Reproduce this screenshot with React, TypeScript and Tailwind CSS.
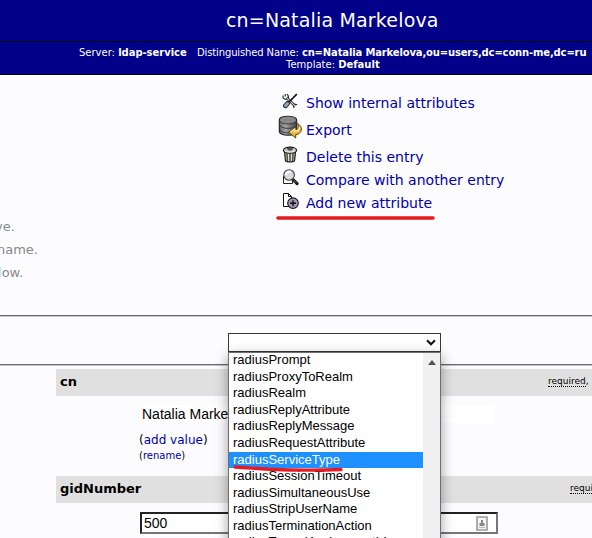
import type { ReactNode } from 'react';

function ToolsIcon() {
  return (
    <svg width="16" height="16" viewBox="0 0 16 16" fill="none">
      <path d="M4.5 4.5 13 13" stroke="#222" strokeWidth="2.6" />
      <path d="M1 2.6v2.1l1.8 1.6h2.4l1.2-1.5V2.9L4.8 1M3.2 1v2.4M12 14.8l-.6-2.4 1.2-1.2 2.6.6" stroke="#222" strokeWidth="1.1" />
      <path d="M4 4.2 13.4 13.4" stroke="#ddd" strokeWidth="1.1" />
      <path d="M14.8 1.2 7 9" stroke="#111" strokeWidth="1.7" />
      <path d="M5.6 10.4 3.4 12.8" stroke="#222" strokeWidth="4.8" strokeLinecap="round" />
      <path d="M5.5 10.5 3.5 12.7" stroke="#8fa8c8" strokeWidth="3" strokeLinecap="round" />
    </svg>
  );
}

function ExportIcon() {
  return (
    <svg width="24" height="24" viewBox="0 0 24 24">
      <defs>
        <linearGradient id="disk" x1="0" x2="1">
          <stop offset="0" stopColor="#666" />
          <stop offset=".35" stopColor="#a5a5a5" />
          <stop offset="1" stopColor="#444" />
        </linearGradient>
      </defs>
      <path d="M1.3 5C1.3.2 18.7.2 18.7 5v11.5c0 5-17.4 5-17.4 0Z" fill="url(#disk)" stroke="#222" strokeWidth="1.1" />
      <ellipse cx="10" cy="5" rx="8" ry="3.6" fill="#888" />
      <path d="M1.8 6c1 4 15.5 4 16.5 0M1.8 10c1 4.5 15.5 4.5 16.5 0M1.8 14.5c1 4.5 15.5 4.5 16.5 0" fill="none" stroke="#333" strokeWidth=".9" />
      <path d="M19.5 8.5c5.5 3 5.5 9.8-1.8 11.3V23L10.5 17.2l7.2-5v2.9c2.6-.6 3.2-3.4 1.8-6.6Z" fill="#edb83e" stroke="#59420d" />
      <path d="m12.6 17 4.1-3v2.4c3.2-.2 5.1-2 4.9-4.6" fill="none" stroke="#ffe9a7" strokeWidth="1.3" />
    </svg>
  );
}

function TrashIcon() {
  return (
    <svg width="16" height="17" viewBox="0 0 16 17">
      <path d="m2.5 6 .9 8.4c.2 2 9 2 9.2 0l.9-8.4Z" fill="#aaa89b" stroke="#24241f" strokeWidth="1.2" />
      <path d="m5 7 .5 8M8 7v8.5M11 7l-.5 8" stroke="#49493f" strokeWidth="1.2" />
      <path d="m6.5 8 .1 7M9.5 8v7" stroke="#eee" strokeWidth=".8" />
      <ellipse cx="8" cy="4.2" rx="6.6" ry="3" fill="#c7c5b9" stroke="#222" strokeWidth="1.2" />
      <ellipse cx="8" cy="2.8" rx="2.4" ry="1.3" fill="#686258" stroke="#222" strokeWidth=".8" />
      <path d="M3 5.1c2 1.3 8 1.3 10 0" fill="none" stroke="#eee" />
    </svg>
  );
}

function CompareIcon() {
  return (
    <svg width="17" height="17" viewBox="0 0 17 17">
      <path d="M1.5 7v7.5h9v-3" fill="#fff" stroke="#222" />
      <path d="m10.5 10 4.6 4.6" stroke="#111" strokeWidth="3" strokeLinecap="round" />
      <path d="m11.3 10.8 3.4 3.4" stroke="#999" strokeWidth=".8" />
      <circle cx="7.1" cy="6" r="5.3" fill="#d8d8dc" stroke="#444" strokeWidth="1.1" />
      <path d="M3.8 6.2C3.9 3.5 6.2 2.4 8.6 3" fill="none" stroke="#fff" strokeWidth="2" />
    </svg>
  );
}

function AddIcon() {
  return (
    <svg width="17" height="17" viewBox="0 0 17 17">
      <path d="M1.5.5h5l3 3v10h-8Z" fill="#fff" stroke="#111" />
      <path d="M6.5.5v3h3" fill="none" stroke="#111" />
      <circle cx="11" cy="10.2" r="5.3" fill="#a196b8" stroke="#17121d" strokeWidth="1.1" />
      <path d="M11 7.2v6M8 10.2h6" stroke="#111" strokeWidth="1.4" />
    </svg>
  );
}

function Action({ icon, children, tall = false }: { icon: ReactNode; children: ReactNode; tall?: boolean }) {
  return (
    <div className={`flex items-center ${tall ? 'h-[31px]' : 'h-[23px]'}`}>
      <span className="flex w-7 shrink-0 items-center justify-start">{icon}</span>
      <a className="text-[14px] leading-[18px] text-[#0000aa]">{children}</a>
    </div>
  );
}

function Rule() {
  return <div className="h-[2px] shrink-0 border-t border-[#6a6a6e] bg-[#c4c4c6]" />;
}

const options = [
  'radiusPrompt', 'radiusProxyToRealm', 'radiusRealm', 'radiusReplyAttribute',
  'radiusReplyMessage', 'radiusRequestAttribute', 'radiusServiceType',
  'radiusSessionTimeout', 'radiusSimultaneousUse', 'radiusStripUserName',
  'radiusTerminationAction', 'radiusTunnelAssignmentId',
];

function AttributeSelect() {
  return (
    <div className="relative z-10 ml-[228px] w-[213px]">
      <div className="flex h-[19px] items-center justify-end border border-[#39393b] bg-white pr-1">
        <svg width="10" height="7" viewBox="0 0 10 7" fill="none"><path d="m1 1.3 4 4 4-4" stroke="#111" strokeWidth="2" /></svg>
      </div>
      <div className="absolute left-0 top-[19px] flex h-[210px] w-[213px] border border-[#6f6f72] bg-white font-['Liberation_Sans',Arial,sans-serif] text-[13px] shadow-[0_4px_12px_rgba(0,0,0,0.38)]">
        <div className="w-[194px]">
          {options.map((option) => (
            <div key={option} className={`relative whitespace-nowrap pl-1 leading-[14px] last:-mt-px ${option === 'radiusServiceType' ? 'z-10 -mt-[0.6px] mb-[1.2px] h-[16px] bg-[#1e90ff] pt-[0.6px] text-white' : 'h-[16.6px] text-black'}`}>
              {option}
              {option === 'radiusServiceType' && (
                <svg className="absolute left-1 top-[12px]" width="112" height="8" viewBox="0 0 112 8" fill="none">
                  <path d="M2 3C20 4 37 5.7 57 6s34 .2 51-.5" stroke="#e51c23" strokeWidth="3.4" strokeLinecap="round" />
                </svg>
              )}
            </div>
          ))}
        </div>
        <div className="flex w-[17px] justify-center bg-[#f0f0f0] pt-[7px]">
          <svg width="8" height="5" viewBox="0 0 8 5"><path d="M0 5 4 0l4 5Z" fill="#505050" /></svg>
        </div>
      </div>
    </div>
  );
}

export default function App() {
  return (
    <main className="flex h-[538px] w-[592px] flex-col overflow-hidden bg-[#fcfcff] font-['DejaVu_Sans',Verdana,sans-serif]">
      <h1 className="h-[42px] shrink-0 border-b border-black bg-[#000088] pl-[226px] pt-[7px] text-[19px] leading-[26px] tracking-[0.17px] text-white">
        <span className="block whitespace-nowrap">cn=Natalia Markelova</span>
      </h1>
      <div className="h-[33px] shrink-0 border-b border-black bg-[#000088] pt-[5px] text-[10px] leading-[12px] text-white">
        <div className="flex pl-[79px] whitespace-nowrap">
          <div className="w-[118px]">Server: <b className="tracking-[-0.04px]">ldap-service</b></div>
          <div className="tracking-[-0.13px]">Distinguished Name: <b className="tracking-[-0.15px]">cn=Natalia Markelova,ou=users,dc=conn-me,dc=ru</b></div>
        </div>
        <div className="pl-[286px]">Template: <b>Default</b></div>
      </div>
      <section className="flex h-[240px] shrink-0">
        <div className="w-[278px] pt-[140px] text-[13px] leading-[23px] text-[#888]">
          <div className="-ml-[5px]">ve.</div>
          <div className="-ml-[3px]">name.</div>
          <div className="-ml-[2px]"><span className="text-[#a3cbef]">l</span>ow.</div>
        </div>
        <div className="pt-[16px]">
          <Action icon={<span className="-mt-[3px] ml-[4px]"><ToolsIcon /></span>}>Show internal attributes</Action>
          <Action tall icon={<span className="-mt-[5px]"><ExportIcon /></span>}>Export</Action>
          <Action icon={<span className="-mt-[5px] ml-[4px]"><TrashIcon /></span>}>Delete this entry</Action>
          <Action icon={<span className="-mt-[5px] ml-[4px]"><CompareIcon /></span>}>Compare with another entry</Action>
          <Action icon={<span className="-mt-[2px] ml-[4px]"><AddIcon /></span>}>Add new attribute</Action>
          <svg className="-ml-[2px] mt-[1px]" width="160" height="6" viewBox="0 0 160 6"><path d="M2 3h155" stroke="#e21b1d" strokeWidth="3.5" strokeLinecap="round" /></svg>
        </div>
      </section>
      <Rule />
      <div className="h-[47px] shrink-0 pt-4"><AttributeSelect /></div>
      <Rule />
      <section className="ml-[56px] pt-[3px] text-black">
        <div className="flex h-[27px] items-center justify-between bg-[#e0e0e0] pb-[2px] pl-[4px]">
          <b className="text-[13px] leading-[18px]">cn</b>
          <span className="w-[44px] whitespace-nowrap pb-[1px] text-[9px] leading-[10px]"><span className="border-b border-dotted border-black">required</span>,</span>
        </div>
        <div className="h-[80px] pl-[84px] pt-[9px]">
          <div className="h-[18px] w-[354px] bg-white pl-[2px] font-['Liberation_Sans',Arial,sans-serif] text-[14px] leading-[18px]">Natalia Markelova</div>
          <div className="-ml-[1px] mt-[9px] text-[12px] leading-[16px]">(<a className="text-[#0000aa]">add value</a>)</div>
          <div className="-ml-[1px] text-[10px] leading-[16px]">(<a className="text-[#0000aa]">rename</a>)</div>
        </div>
        <div className="flex h-[27px] items-center justify-between bg-[#e0e0e0] pb-[2px] pl-[4px]">
          <b className="text-[13px] leading-[18px]">gidNumber</b>
          <span className="w-[22px] overflow-hidden whitespace-nowrap pb-[1px] text-[9px] leading-[12px]"><span className="border-b border-dotted border-black">required</span></span>
        </div>
        <div className="ml-[84px] mt-[9px] flex h-[22px] w-[358px] items-center justify-between border-2 border-b-[#767676] border-l-[#222] border-r-[#767676] border-t-[#222] bg-white pl-[2px] pr-[8px] font-['Liberation_Sans',Arial,sans-serif] text-[14px]">
          <span>500</span>
          <svg width="12" height="15" viewBox="0 0 12 15"><path d="M1 1h10v13H1Z" fill="#f3f3f3" stroke="#999" strokeWidth="1.6" /><path d="M3.5 10V7H5V4h2v3h1.5v3Z" fill="#888" /><path d="M3 11.5h6" stroke="#bbb" /></svg>
        </div>
      </section>
    </main>
  );
}
